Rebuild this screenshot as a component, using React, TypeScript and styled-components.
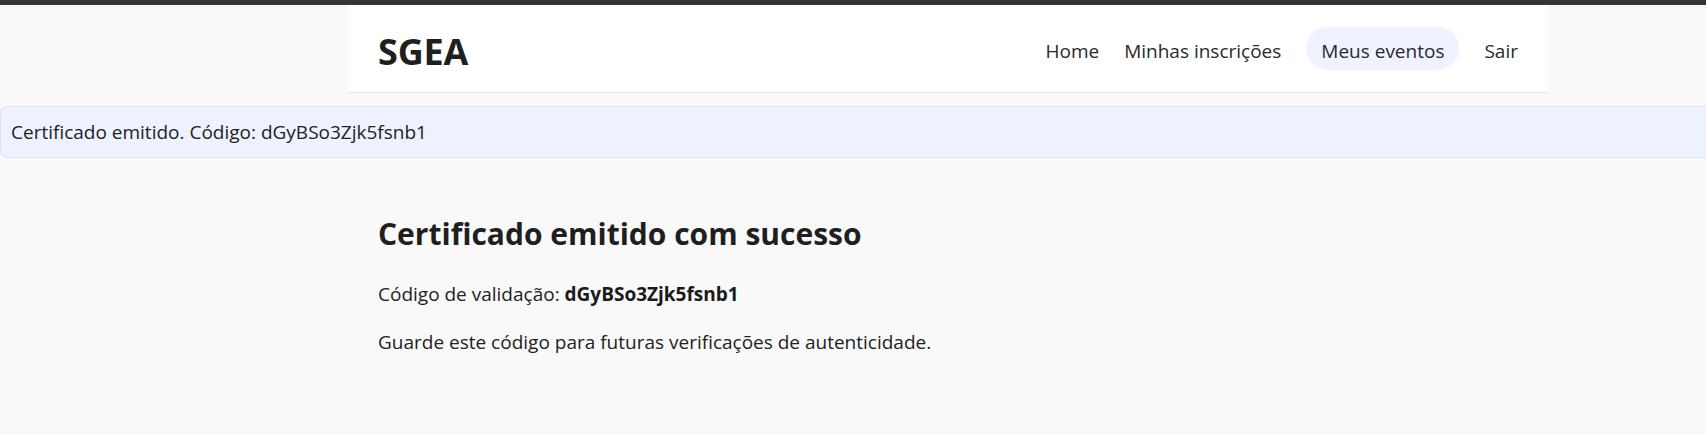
import styled, { createGlobalStyle } from "styled-components";

const navLinks = [
  { label: "Home", href: "#" },
  { label: "Minhas inscrições", href: "#" },
  { label: "Meus eventos", href: "#", active: true },
  { label: "Sair", href: "#" },
];

const code = "dGyBSo3Zjk5fsnb1";

const GlobalStyle = createGlobalStyle`
  html, body {
    margin: 0;
    padding: 0;
    background: #f9f9f9;
  }

  body {
    font-family: "Open Sans", "Noto Sans", sans-serif;
    color: #222;
  }
`;

export default function App() {
  return (
    <>
      <GlobalStyle />
      <Page>
        <TopStrip />
        <Header>
          <Brand>SGEA</Brand>
          <Nav>
            {navLinks.map((link) => (
              <NavLink key={link.label} href={link.href} $active={link.active}>
                {link.label}
              </NavLink>
            ))}
          </Nav>
        </Header>

        <Alert>Certificado emitido. Código: {code}</Alert>

        <Main>
          <Title>Certificado emitido com sucesso</Title>
          <Text>
            Código de validação: <strong>{code}</strong>
          </Text>
          <Text>Guarde este código para futuras verificações de autenticidade.</Text>
        </Main>
      </Page>
    </>
  );
}

// the page column sits 348px in, as in the original wide window
const Page = styled.div`
  min-height: 435px;
  display: grid;
  grid-template-columns: 348px minmax(0, 1200px) 1fr;
  align-content: start;
  background: #f9f9f9;
`;

const TopStrip = styled.div`
  grid-column: 1 / -1;
  height: 5px;
  background: #353535;
`;

const Header = styled.header`
  grid-column: 2;
  box-sizing: border-box;
  height: 88px;
  padding: 0 30px;
  display: flex;
  align-items: center;
  justify-content: space-between;
  background: #ffffff;
  border-bottom: 1px solid #e4e4e4;
`;

const Brand = styled.a`
  padding-top: 5px;
  font-size: 36px;
  font-weight: 700;
  color: #1f1f1f;
  text-decoration: none;
  letter-spacing: -0.2px;
`;

const Nav = styled.nav`
  display: flex;
  align-items: center;
  gap: 25px;
`;

const NavLink = styled.a<{ $active?: boolean }>`
  font-size: 19px;
  line-height: 27px;
  color: #2a2a2a;
  text-decoration: none;
  padding: ${(p) => (p.$active ? "11px 15px 5px" : "11px 0 5px")};
  border-radius: 999px;
  background: ${(p) => (p.$active ? "#eff3ff" : "transparent")};
`;

const Alert = styled.div`
  grid-column: 1 / -1;
  margin-top: 13px;
  padding: 11px 10px;
  font-size: 19px;
  line-height: 28px;
  color: #222;
  background: #eef2fe;
  border: 1px solid #d7e0fa;
  border-right: none;
  border-radius: 8px 0 0 8px;
`;

const Main = styled.main`
  grid-column: 2;
  padding: 56px 30px 0;
`;

const Title = styled.h2`
  margin: 0 0 26px;
  font-size: 30px;
  line-height: 40px;
  font-weight: 700;
  color: #1f1f1f;
`;

const Text = styled.p`
  margin: 0 0 20px;
  font-size: 19px;
  line-height: 28px;
  color: #222;

  strong {
    font-weight: 700;
    color: #1a1a1a;
  }
`;
